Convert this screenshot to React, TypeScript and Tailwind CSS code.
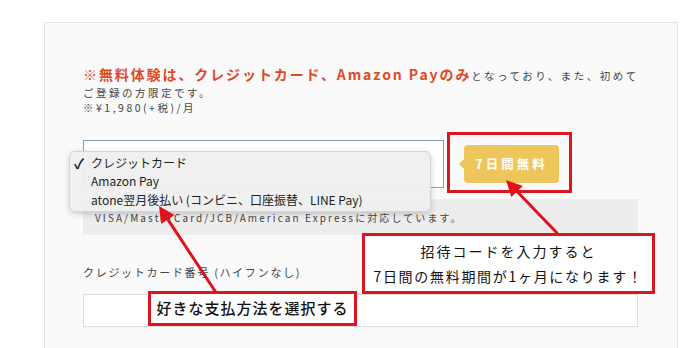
import React from "react";

const jp = "font-['Noto_Sans_CJK_JP','Noto_Sans',sans-serif]";

// 赤い注釈の矢印（先端 tip、根元 tail）
function Arrow({ tail, tip }: { tail: [number, number]; tip: [number, number] }) {
  const [x1, y1] = tail;
  const [x2, y2] = tip;
  const a = Math.atan2(y2 - y1, x2 - x1);
  const len = 16;
  const w = 8;
  const bx = x2 - len * Math.cos(a);
  const by = y2 - len * Math.sin(a);
  const px = -Math.sin(a) * w;
  const py = Math.cos(a) * w;
  return (
    <g>
      <line x1={x1} y1={y1} x2={bx} y2={by} stroke="#e2111c" strokeWidth={3} strokeLinecap="round" />
      <polygon points={`${x2},${y2} ${bx + px},${by + py} ${bx - px},${by - py}`} fill="#e2111c" />
    </g>
  );
}

export default function App() {
  return (
    <div className={`relative h-[348px] w-[700px] overflow-hidden bg-white ${jp}`}>
      <div className="ml-[44px] mt-[22px] h-[400px] w-[634px] border border-[#e4e4e4] bg-[#fafafa] pl-[38px] pr-[39px] pt-[42px]">
        <div className="text-[10.5px] leading-[15px] tracking-[2.5px] text-[#444]">
          <div className="whitespace-nowrap leading-[18px]">
            <span className="text-[14px] font-bold tracking-[1.9px] text-[#de4a23]">
              ※無料体験は、クレジットカード、Amazon Payのみ
            </span>
            となっており、また、初めて
          </div>
          <div>ご登録の方限定です。</div>
          <div>※¥1,980(+税)/月</div>
        </div>

        <div className="mt-[25px] flex items-center">
          <div className="h-[48px] w-[361px] border border-[#7fa6b8] bg-white" />
          <div className="relative ml-[20px] flex h-[38px] w-[95px] items-center justify-center rounded-[4px] bg-[#efc65c]">
            <span className="absolute left-[-5px] top-[14px] h-0 w-0 border-y-[5px] border-r-[5px] border-y-transparent border-r-[#efc65c]" />
            <span className="text-[12.5px] font-bold tracking-[3px] text-white">7日間無料</span>
          </div>
        </div>

        <div className="mt-[11px] flex h-[36px] items-center bg-[#ededed] pl-[12px] text-[10px] tracking-[2.1px] text-[#444]">
          VISA/MasterCard/JCB/American Expressに対応しています。
        </div>

        <div className="mt-[29px] text-[11px] tracking-[1.7px] text-[#444]">
          クレジットカード番号 (ハイフンなし)
        </div>
        <div className="mt-[13px] h-[33px] border border-[#dedede] bg-white" />
      </div>

      {/* ドロップダウン */}
      <div className="absolute left-[69px] top-[151px] flex h-[61px] w-[362px] flex-col justify-center rounded-[6px] border border-[#d6d6d6] bg-[#efefef]/95 text-[12px] leading-[18.5px] text-[#222] shadow-[0_2px_6px_rgba(0,0,0,0.18)]">
        <div className="flex">
          <span className="w-[21px] pl-[4px] text-[14px] font-bold leading-[18.5px]">✓</span>
          <span>クレジットカード</span>
        </div>
        <div className="pl-[21px]">Amazon Pay</div>
        <div className="pl-[21px]">atone翌月後払い (コンビニ、口座振替、LINE Pay)</div>
      </div>

      {/* 注釈 */}
      <div className="absolute left-[447px] top-[132px] h-[61px] w-[125px] border-[3px] border-[#dc1620]" />

      <div className="absolute left-[362px] top-[233px] flex h-[61px] w-[293px] flex-col items-center justify-center border-[3px] border-[#dc1620] bg-white text-[14px] leading-[25px] text-[#111]">
        <div className="tracking-[2px]">招待コードを入力すると</div>
        <div className="tracking-[1.7px]">7日間の無料期間が1ヶ月になります！</div>
      </div>

      <div className="absolute left-[148px] top-[291px] flex h-[35px] w-[209px] items-center justify-center border-[3px] border-[#dc1620] bg-white text-[15px] font-medium tracking-[1px] text-[#111]">
        好きな支払方法を選択する
      </div>

      <svg className="pointer-events-none absolute left-0 top-0" width="700" height="348">
        <Arrow tail={[215, 291]} tip={[159, 206]} />
        <Arrow tail={[557, 233]} tip={[506, 180]} />
      </svg>
    </div>
  );
}
